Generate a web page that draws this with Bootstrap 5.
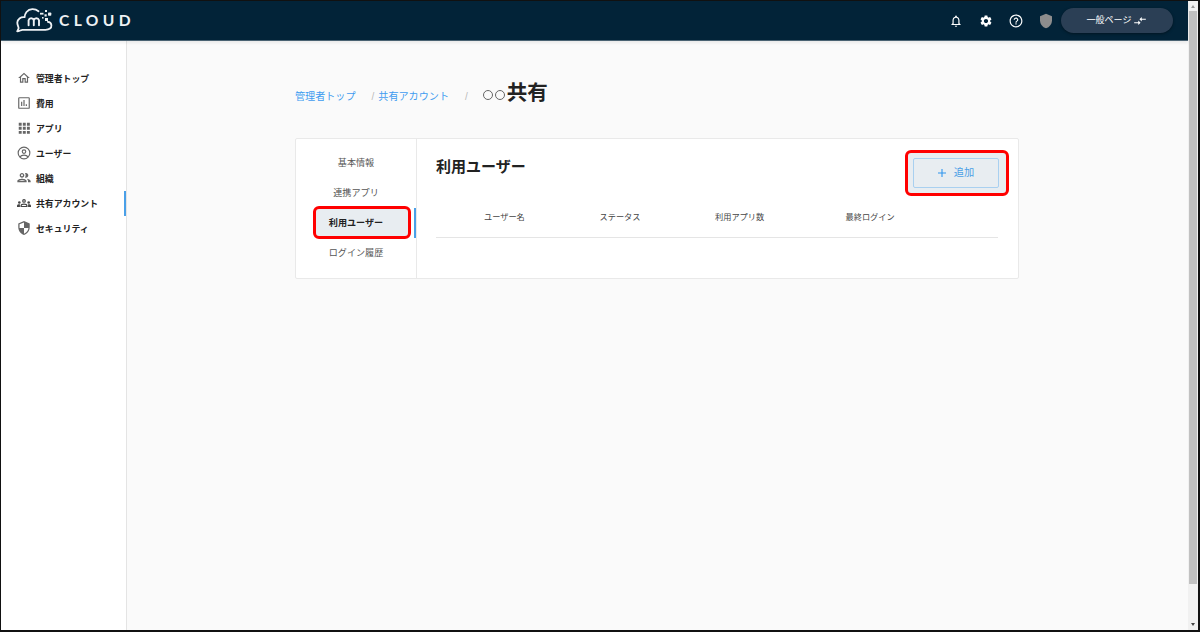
<!DOCTYPE html>
<html lang="ja">
<head>
<meta charset="utf-8">
<meta name="viewport" content="width=device-width, initial-scale=1">
<title>利用ユーザー</title>
<link href="https://cdn.jsdelivr.net/npm/bootstrap@5.3.0/dist/css/bootstrap.min.css" rel="stylesheet">
<style>
body{font-family:"Liberation Sans","Noto Sans CJK JP",sans-serif;font-size:9px;line-height:1;color:#222;background:#fafafa}
.frame{height:632px;border:solid #111;border-width:1px 2px 2px 1px}
.topbar{height:40px;background:#022338;border-bottom:1px solid #4a6272;box-shadow:0 2px 3px #0001;padding-left:14px;position:relative}
.brand-word{font:700 15.6px/1 Lato,sans-serif;letter-spacing:4.4px;margin-left:6px;padding-top:1px;color:#eef1f4}
.tools{margin-right:15px}
.tools .ic{width:14px;height:14px;fill:#fff;margin-right:16px}
.tools .shield{width:16px;height:16px;fill:#8d8d8d;margin-right:7px;margin-left:-1px}
.pill{width:112px;height:25px;background:#2b3f55;font-size:9px;color:#fff!important;box-shadow:0 1px 3px #0006}
.pill span{padding-top:1px}
.pill svg{width:14px;height:14px;fill:#fff;margin-left:2px}
.side{width:126px;background:#fff;border-right:1px solid #e4e4e4;padding-top:25px}
.side .nav-link{height:25px;padding:1px 0 0 16px;color:#222;font-size:8.9px;font-weight:700;line-height:11px;border-right:2px solid transparent}
.side .nav-link svg{width:14px;height:14px;fill:#666;margin:0 5px 2px 0}
.side .active{border-right-color:#4aa0e8}
.main-area{padding:38px 169px 0 168px}
.crumbs{height:28px;color:#bbb;font-size:10px;margin-bottom:31px}
.crumbs>a,.crumbs>span{padding-top:8px}
.crumbs .crumb-link{color:#3f9cf0;text-decoration:none;font-size:10.1px;white-space:nowrap}
.crumbs h1{font-size:20.5px;font-weight:700;margin:0 0 0 15px;line-height:28px;color:#222}
.rings{display:inline-flex;gap:2px;margin:4px 2px 0 0}
.rings i{width:10px;height:10px;border:1px solid #666;border-radius:50%}
.panel{height:141px;border:1px solid #e9e9e9;border-radius:2px;background:#fff}
.tabs{width:121px;border-right:1px solid #e9e9e9;padding-top:9px}
.tabs a{height:30px;color:#555;text-decoration:none;font-size:9.1px;padding-top:2px}
.tabs .on{border-right:2px solid #4aa0e8;color:#222;font-weight:700;position:relative;padding-left:2px}
.tabs .on span{position:relative}
.callout{position:absolute;border:3px solid #f00;border-radius:6px;background:#e8edf1}
.body-area{padding:0 20px 0 19px}
.head-row{height:69px;padding-top:19px}
.head-row h2{font-size:15px;font-weight:700;margin:0}
.addbox{width:104px;height:46px;border:3px solid #f00;border-radius:6px;background:#e8edf1;margin:-8px -11px 0 0;padding:5px 7px 5px 5px}
.addbox .btn{border:1px solid #a9d0f0;border-radius:2px;color:#4a9fe6;font-size:10.2px;line-height:1;padding:0;width:86px;height:30px}
.cols{height:30px;border-bottom:1px solid #e5e5e5;font-size:8.2px;color:#444;display:grid;grid-template-columns:115.5px 115.5px 130.5px auto;padding:6px 0 0 48px;white-space:nowrap}
.scroll{width:10px;background:#f1f1f1}
.thumb{width:8px;height:573px;background:#c1c1c1}
</style>
</head>
<body>
<div class="frame d-flex overflow-hidden">
<div class="flex-grow-1 d-flex flex-column">
<header class="topbar d-flex align-items-center justify-content-between">
  <div class="d-flex align-items-center">
    <svg width="38" height="26" viewBox="0 0 38 26" fill="none" stroke="#eef1f4" stroke-width="1.8" stroke-linecap="round" stroke-linejoin="round">
      <path d="M23.500 3.300C20 .4 14.500 .4 11.500 4 10 6 9.600 7.500 9.600 9.200 5.500 8.700 2.600 11.200 2.300 14.500 2.100 17 3.800 18.800 3.600 20.300L2.200 23.300C4.500 23.300 5.800 21.800 7.500 21.800H30.500C34.500 21.800 36.600 20 36.400 17.300 36.300 15 34.800 14 32.800 13.900"/>
      <path stroke-width="1.9" d="M13.600 17.200v-5a2.700 2.700 0 0 1 5.200 0v5m0-5a2.700 2.700 0 0 1 5.200 0v5"/>
      <g fill="#eef1f4" stroke="none"><rect x="25" y="4.800" width="3.500" height="1.800"/><rect x="30" y="2" width="2" height="2"/><rect x="33" y="4.500" width="3.300" height="3.300" rx=".8"/><rect x="29.500" y="6.300" width="2.200" height="2.200"/><rect x="30" y="10" width="3" height="3"/><rect x="27" y="9" width="1.600" height="1.600"/></g>
    </svg>
    <span class="brand-word">CLOUD</span>
  </div>
  <div class="tools d-flex align-items-center">
    <svg class="ic" viewBox="0 0 24 24"><path d="M12 22c1.100 0 2-.9 2-2h-4c0 1.100.9 2 2 2zm6-6v-5c0-3.070-1.630-5.640-4.500-6.320V4c0-.83-.67-1.500-1.500-1.500s-1.500.67-1.500 1.500v.68C7.640 5.360 6 7.920 6 11v5l-2 2v1h16v-1l-2-2zm-2 1H8v-6c0-2.480 1.510-4.500 4-4.500s4 2.020 4 4.500v6z"/></svg>
    <svg class="ic" viewBox="0 0 24 24"><path d="M19.14 12.94c.04-.3.06-.61.06-.94 0-.32-.02-.64-.07-.94l2.030-1.580c.18-.14.23-.41.12-.61l-1.920-3.320c-.12-.22-.37-.29-.59-.22l-2.390.96c-.5-.38-1.030-.7-1.620-.94l-.36-2.540c-.04-.24-.24-.41-.48-.41h-3.840c-.24 0-.43.17-.47.41l-.36 2.540c-.59.24-1.130.57-1.620.94l-2.390-.96c-.22-.08-.47 0-.59.22L2.740 8.870c-.12.21-.08.47.12.61l2.030 1.580c-.05.3-.09.63-.09.94s.02.64.07.94l-2.030 1.580c-.18.14-.23.41-.12.61l1.920 3.320c.12.22.37.29.59.22l2.390-.96c.5.38 1.030.7 1.620.94l.36 2.540c.05.24.24.41.48.41h3.840c.24 0 .44-.17.47-.41l.36-2.540c.59-.24 1.130-.56 1.620-.94l2.390.96c.22.08.47 0 .59-.22l1.920-3.320c.12-.22.07-.47-.12-.61l-2.010-1.580zM12 15.600c-1.980 0-3.600-1.620-3.600-3.600s1.620-3.600 3.600-3.600 3.600 1.620 3.600 3.600-1.620 3.600-3.600 3.600z"/></svg>
    <svg class="ic" viewBox="0 0 24 24"><path d="M11 18h2v-2h-2v2zm1-17C5.900 1 1 5.900 1 12s4.900 11 11 11 11-4.900 11-11S18.100 1 12 1zm0 20c-5 0-9-4-9-9s4-9 9-9 9 4 9 9-4 9-9 9zm0-15c-2.210 0-4 1.790-4 4h2c0-1.100.9-2 2-2s2 .9 2 2c0 2-3 1.750-3 5h2c0-2.250 3-2.500 3-5 0-2.210-1.790-4-4-4z"/></svg>
    <svg class="shield" viewBox="0 0 24 24"><path d="M12 1L3 5v6c0 5.550 3.840 10.740 9 12 5.160-1.260 9-6.450 9-12V5l-9-4z"/></svg>
    <a class="pill btn rounded-pill border-0 p-0 d-flex align-items-center justify-content-center"><span>一般ページ</span><svg viewBox="0 0 24 24"><path d="M9.010 14H2v2h7.010v3L13 15l-3.990-4v3zm5.980-1v-3H22V8h-7.010V5L11 9l3.990 4z"/></svg></a>
  </div>
</header>
<div class="d-flex flex-grow-1">
  <nav class="side nav flex-column flex-nowrap flex-shrink-0">
    <a class="nav-link d-flex align-items-center"><svg viewBox="0 0 24 24"><path d="M12 5.690l5 4.500V18h-2v-6H9v6H7v-7.810l5-4.500M12 3L2 12h3v8h6v-6h2v6h6v-8h3L12 3z"/></svg>管理者トップ</a>
    <a class="nav-link d-flex align-items-center"><svg viewBox="0 0 24 24"><path d="M20 2H4a2 2 0 0 0-2 2v16a2 2 0 0 0 2 2h16a2 2 0 0 0 2-2V4a2 2 0 0 0-2-2zm0 18H4V4h16v16zM7 10h2v7H7zm4-3h2v10h-2zm4 7h2v3h-2z"/></svg>費用</a>
    <a class="nav-link d-flex align-items-center"><svg viewBox="0 0 24 24"><path d="M3 3h5v5H3zm7 0h5v5h-5zm7 0h5v5h-5zM3 10h5v5H3zm7 0h5v5h-5zm7 0h5v5h-5zM3 17h5v5H3zm7 0h5v5h-5zm7 0h5v5h-5z"/></svg>アプリ</a>
    <a class="nav-link d-flex align-items-center"><svg viewBox="0 0 24 24"><g style="fill:none;stroke:#666;stroke-width:2"><circle cx="12" cy="12" r="10"/><circle cx="12" cy="9.500" r="3"/><path d="M5 18.500c3-4 11-4 14 0"/></g></svg>ユーザー</a>
    <a class="nav-link d-flex align-items-center"><svg viewBox="1.500 2 21 21"><path d="M9 13.750c-2.340 0-7 1.170-7 3.500V19h14v-1.750c0-2.330-4.660-3.500-7-3.500zM4.340 17c.84-.58 2.870-1.250 4.660-1.250s3.820.67 4.660 1.250H4.340zM9 12c1.930 0 3.500-1.570 3.500-3.500S10.930 5 9 5 5.500 6.570 5.500 8.500 7.070 12 9 12zm0-5c.83 0 1.500.67 1.500 1.500S9.830 10 9 10s-1.500-.67-1.500-1.500S8.170 7 9 7zm7.040 6.810c1.160.84 1.960 1.960 1.960 3.440V19h4v-1.750c0-2.020-3.500-3.170-5.960-3.440zM15 12c1.930 0 3.500-1.570 3.500-3.500S16.930 5 15 5c-.54 0-1.040.13-1.500.35.63.89 1 1.980 1 3.150s-.37 2.260-1 3.150c.46.22.96.35 1.500.35z"/></svg>組織</a>
    <a class="nav-link active d-flex align-items-center"><svg viewBox="0 0 24 24"><g style="fill:none;stroke:#444;stroke-width:2"><circle cx="12" cy="8.500" r="2.200"/><path d="M7 18v-1.500c0-3.500 10-3.500 10 0V18z"/></g><g fill="#444"><circle cx="4" cy="11" r="2.200"/><circle cx="20" cy="11" r="2.200"/><path d="M0 19v-2.500c0-2 3-2.500 5-2.200v4.700zM24 19v-2.500c0-2-3-2.500-5-2.200v4.700z"/></g></svg>共有アカウント</a>
    <a class="nav-link d-flex align-items-center"><svg viewBox="1 1 22 22"><path d="M12 1L3 5v6c0 5.550 3.840 10.740 9 12 5.160-1.260 9-6.450 9-12V5l-9-4zm0 10.990h7c-.53 4.120-3.280 7.790-7 8.940V12H5V6.300l7-3.110v8.800z"/></svg>セキュリティ</a>
  </nav>
  <main class="main-area flex-grow-1">
    <div class="crumbs d-flex align-items-center">
      <a class="crumb-link">管理者トップ</a><span class="ms-3">/</span><a class="crumb-link ms-1">共有アカウント</a><span class="ms-3">/</span>
      <h1 class="d-flex align-items-center"><span class="rings"><i></i><i></i></span>共有</h1>
    </div>
    <section class="panel d-flex">
      <div class="tabs d-flex flex-column flex-shrink-0">
        <a class="d-flex align-items-center justify-content-center">基本情報</a>
        <a class="d-flex align-items-center justify-content-center">連携アプリ</a>
        <a class="on d-flex align-items-center justify-content-center"><i class="callout" style="left:17px;top:-2px;width:98px;height:33px"></i><span>利用ユーザー</span></a>
        <a class="d-flex align-items-center justify-content-center">ログイン履歴</a>
      </div>
      <div class="body-area flex-grow-1">
        <div class="head-row d-flex justify-content-between align-items-start">
          <h2>利用ユーザー</h2>
          <div class="addbox"><a class="btn d-flex align-items-center justify-content-center"><svg class="me-2" width="8" height="8" viewBox="0 0 8 8" stroke="#2f96ee" stroke-width="1.100"><path d="M4 0v8M0 4h8"/></svg>追加</a></div>
        </div>
        <div class="cols"><span>ユーザー名</span><span>ステータス</span><span>利用アプリ数</span><span>最終ログイン</span></div>
      </div>
    </section>
  </main>
</div>
</div>
<div class="scroll d-flex flex-column align-items-center justify-content-between flex-shrink-0">
  <div class="d-flex flex-column align-items-center"><svg width="8" height="10" viewBox="0 0 8 10"><path fill="#999" d="M2 7l2-3 2 3z"/></svg><div class="thumb"></div></div>
  <svg width="8" height="10" viewBox="0 0 8 10"><path fill="#444" d="M2 3h4L4 6z"/></svg>
</div>
</div>
<script src="https://cdn.jsdelivr.net/npm/bootstrap@5.3.0/dist/js/bootstrap.bundle.min.js"></script>
</body>
</html>
